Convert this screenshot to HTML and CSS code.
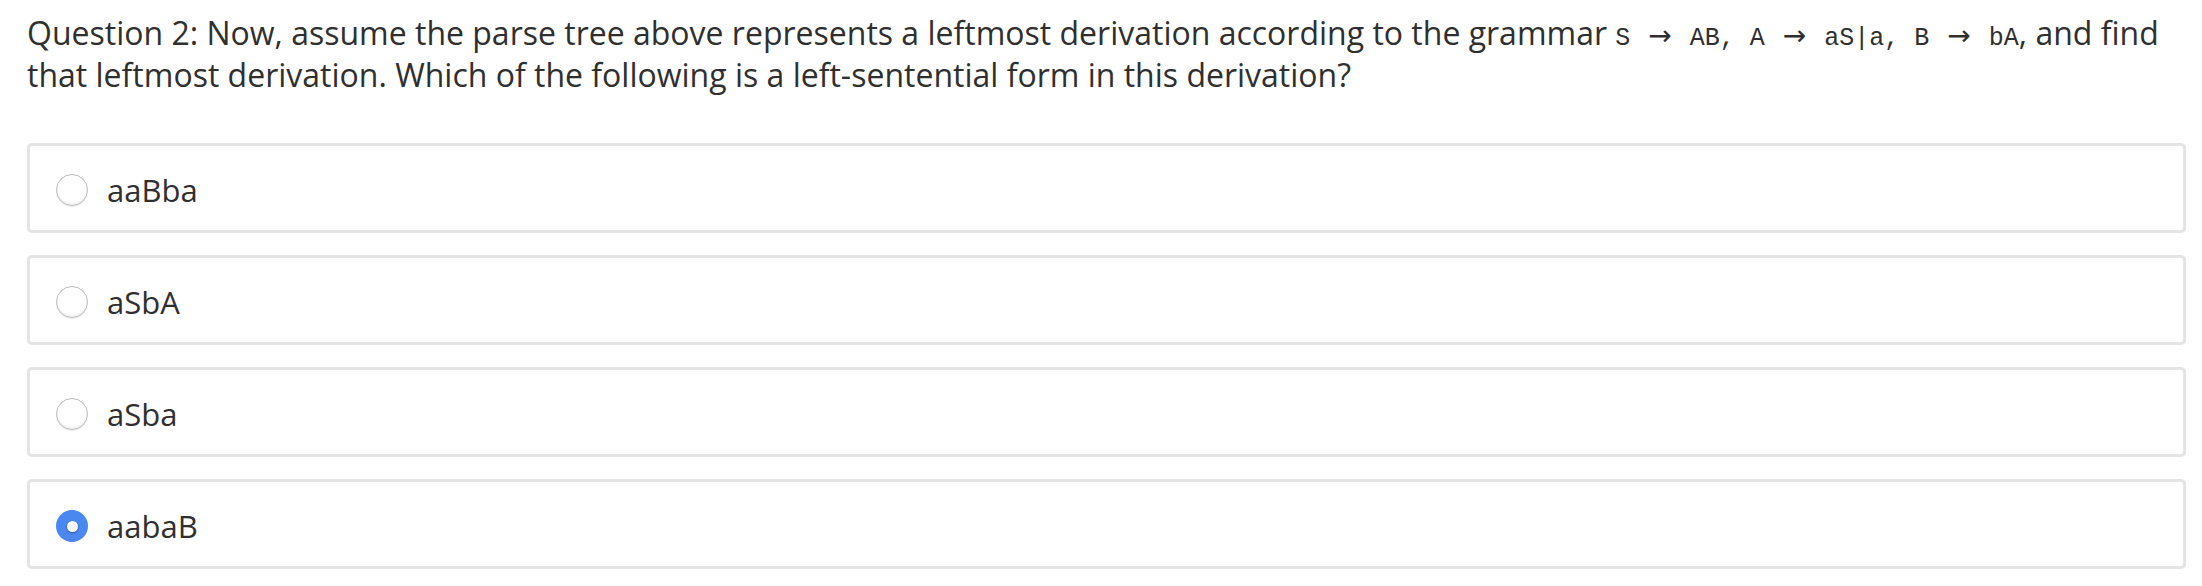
FILE: index.html
```html
<!DOCTYPE html>
<html lang="en">
<head>
<meta charset="utf-8">
<title>Question 2</title>
<link rel="stylesheet" href="styles.css">
</head>
<body>
<div class="quiz">
  <p class="question">Question 2: Now, assume the parse tree above represents a leftmost derivation according to the grammar <span class="mono">S</span><span class="arrow">→</span><span class="mono">AB, A</span><span class="arrow">→</span><span class="mono">aS|a, B</span><span class="arrow">→</span><span class="mono">bA</span>, and find that leftmost derivation. Which of the following is a left-sentential form in this derivation?</p>
  <ul class="options">
    <li class="option"><label class="option-label"><input type="radio" name="q2" class="radio"><span class="option-text">aaBba</span></label></li>
    <li class="option"><label class="option-label"><input type="radio" name="q2" class="radio"><span class="option-text">aSbA</span></label></li>
    <li class="option"><label class="option-label"><input type="radio" name="q2" class="radio"><span class="option-text">aSba</span></label></li>
    <li class="option"><label class="option-label"><input type="radio" name="q2" class="radio" checked><span class="option-text">aabaB</span></label></li>
  </ul>
</div>
</body>
</html>
```
FILE: styles.css
```css
* { box-sizing: border-box; }
html, body { margin: 0; padding: 0; background: #ffffff; }
body {
  font-family: "Open Sans", "Noto Sans", sans-serif;
  color: #2f2f2f;
}
.quiz {
  padding: 12px 16px 0 27px;
}
.question {
  margin: 0;
  font-size: 32px;
  line-height: 42px;
  max-width: 2160px;
}
.mono {
  font-family: "Liberation Mono", "Courier New", monospace;
  font-size: 25px;
  line-height: 1;
}
.arrow {
  font-family: "DejaVu Sans", sans-serif;
  font-size: 28px;
  line-height: 1;
  margin: 0 18px 0 18px;
}
.options {
  list-style: none;
  margin: 47px 0 0 0;
  padding: 0;
  display: flex;
  flex-direction: column;
  gap: 22px;
  width: 2159px;
}
.option {
  height: 90px;
  border: 3px solid #e4e4e4;
  border-radius: 5px;
  background: #fff;
}
.option-label {
  display: flex;
  align-items: center;
  height: 100%;
  padding-left: 26px;
  padding-top: 4px;
}
.radio {
  appearance: none;
  -webkit-appearance: none;
  margin: 0;
  width: 32px;
  height: 32px;
  border-radius: 50%;
  border: 1.5px solid #bcbcbc;
  background: #fff;
  box-shadow: inset 0 -2px 3px rgba(0,0,0,0.06), 0 1px 1px rgba(0,0,0,0.08);
  position: relative;
  flex: none;
}
.radio:checked {
  border: none;
  background: #4a88f0;
  box-shadow: none;
}
.radio:checked::after {
  content: "";
  position: absolute;
  left: 10.5px;
  top: 10.5px;
  width: 11px;
  height: 11px;
  border-radius: 50%;
  background: #fff;
  box-shadow: 0 1px 2px rgba(0,0,0,0.35);
}
.option-text {
  margin-left: 19px;
  font-size: 31px;
  line-height: 40px;
}
```
